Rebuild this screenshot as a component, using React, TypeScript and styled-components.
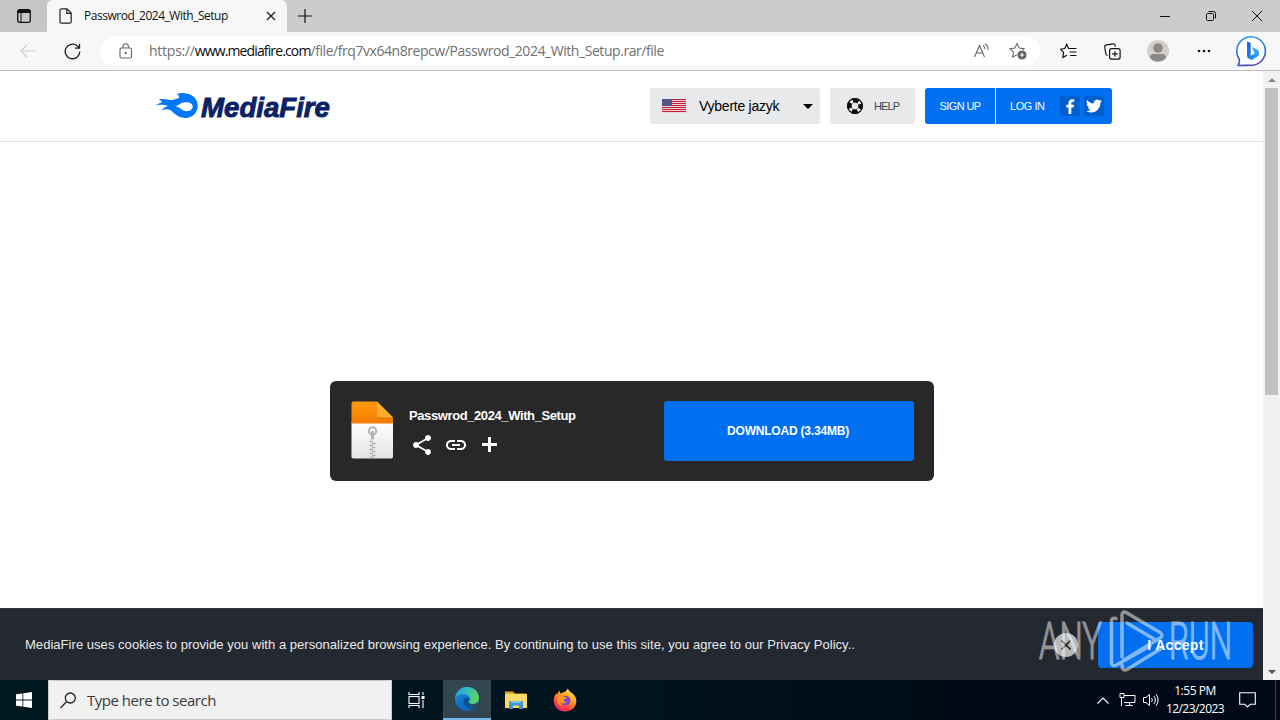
import React from 'react';
import styled, { createGlobalStyle } from 'styled-components';

const ui = `'Open Sans', 'Noto Sans', sans-serif`;
const web = `'Liberation Sans', Arial, sans-serif`;

const colors = {
  blue: '#0070f0',
  blueDark: '#005fce',
  tabStrip: '#cccccc',
  chrome: '#f7f7f7',
  button: '#e7e9ea',
  card: '#282828',
  cookie: '#242830',
};

const GlobalStyle = createGlobalStyle`
  * { box-sizing: border-box; }
  body { margin: 0; overflow: hidden; background: #fff; }
  button { border: 0; padding: 0; margin: 0; background: none; font: inherit; color: inherit; }
  svg { display: block; flex: none; }
`;

const Desktop = styled.div`
  width: 1280px;
  height: 720px;
  display: flex;
  flex-direction: column;
  font-family: ${ui};
  position: relative;
`;

const Text = styled.span<{ $size: number; $spacing?: number; $color?: string; $weight?: number; $web?: boolean }>`
  font-family: ${p => (p.$web ? web : ui)};
  font-size: ${p => p.$size}px;
  font-weight: ${p => p.$weight || 400};
  letter-spacing: ${p => p.$spacing || 0}px;
  color: ${p => p.$color || 'inherit'};
  white-space: pre;
  line-height: 1.3;
`;

const TabStrip = styled.div`
  height: 32px;
  background: ${colors.tabStrip};
  display: flex;
  align-items: stretch;
`;

const TabMenu = styled.div`
  width: 47px;
  display: flex;
  align-items: center;
  justify-content: center;
  border-radius: 0 0 6px 0;
  background: #c6c6c6;
`;

const ActiveTab = styled.div`
  width: 240px;
  background: ${colors.chrome};
  border-radius: 6px 6px 0 0;
  display: flex;
  align-items: center;
  padding: 0 10px 0 12px;
`;

const TabTitle = styled(Text)`
  margin-left: 12px;
  flex: 1;
`;

const NewTab = styled.button`
  width: 36px;
  display: flex;
  align-items: center;
  justify-content: center;
`;

const WindowButtons = styled.div`
  margin-left: auto;
  display: flex;
`;

const WindowButton = styled.button`
  width: 46px;
  display: flex;
  align-items: center;
  justify-content: center;
`;

const Toolbar = styled.div`
  height: 39px;
  background: ${colors.chrome};
  border-bottom: 1px solid #bdbdbd;
  display: flex;
  align-items: center;
  padding-left: 6px;
`;

const ToolSlot = styled.button<{ $width?: number }>`
  width: ${p => p.$width || 44}px;
  height: 38px;
  display: flex;
  align-items: center;
  justify-content: center;
`;

const AddressBar = styled.div`
  width: 940px;
  height: 30px;
  margin: 0 6px;
  border-radius: 15px;
  background: #fff;
  display: flex;
  align-items: center;
  padding: 0 13px 0 19px;
`;

const Url = styled.div`
  flex: 1;
  margin-left: 16px;
  display: flex;
`;

const AddressActions = styled.div`
  display: flex;
  align-items: center;
  gap: 19px;
`;

const Viewport = styled.div`
  height: 609px;
  display: flex;
`;

const Page = styled.div`
  width: 1263px;
  display: flex;
  flex-direction: column;
  background: #fff;
`;

const Scrollbar = styled.div`
  width: 17px;
  background: #f1f1f1;
  display: flex;
  flex-direction: column;
  align-items: center;
`;

const ScrollArrow = styled.div`
  height: 17px;
  display: flex;
  align-items: center;
`;

const ScrollThumb = styled.div`
  width: 13px;
  height: 307px;
  background: #c1c1c1;
  margin-bottom: auto;
`;

const SiteHeader = styled.header`
  height: 71px;
  border-bottom: 1px solid #dfe1e3;
  display: flex;
  align-items: flex-start;
  padding: 17px 151px 0 152px;
`;

const Logo = styled.div`
  margin-right: auto;
  padding-top: 4px;
`;

const HeaderActions = styled.div`
  display: flex;
  gap: 10px;
`;

const HeaderButton = styled.button<{ $width: number }>`
  width: ${p => p.$width}px;
  height: 36px;
  border-radius: 3px;
  background: ${colors.button};
  display: flex;
  align-items: center;
`;

const LanguageButton = styled(HeaderButton)`
  padding: 0 7px 0 12px;
`;

const LanguageName = styled(Text)`
  flex: 1;
  text-align: left;
  margin-left: 13px;
`;

const HelpButton = styled(HeaderButton)`
  padding-left: 17px;
  gap: 11px;
`;

const AccountButtons = styled.div`
  display: flex;
  width: 187px;
  height: 36px;
  border-radius: 3px;
  overflow: hidden;
  background: ${colors.blue};
  color: #fff;
`;

const SignUp = styled.button`
  width: 71px;
  border-right: 1px solid #fff;
  display: flex;
  align-items: center;
  justify-content: center;
`;

const LogIn = styled.div`
  flex: 1;
  display: flex;
  align-items: center;
  justify-content: space-between;
  padding: 0 8px 0 14px;
`;

const SocialGroup = styled.div`
  display: flex;
  gap: 4px;
`;

const Social = styled.span`
  width: 20px;
  height: 20px;
  border-radius: 2px;
  background: ${colors.blueDark};
  display: flex;
  align-items: center;
  justify-content: center;
`;

const Main = styled.main`
  flex: 1;
  padding-top: 239px;
  display: flex;
  justify-content: center;
  align-items: flex-start;
`;

const DownloadCard = styled.section`
  width: 604px;
  height: 100px;
  margin-left: 1px;
  border-radius: 6px;
  background: ${colors.card};
  color: #fff;
  display: flex;
  align-items: flex-start;
  padding: 20px 20px 0 21px;
`;

const FileInfo = styled.div`
  flex: 1;
  margin-left: 16px;
  padding-top: 7px;
  display: flex;
  flex-direction: column;
  gap: 8px;
`;

const FileActions = styled.div`
  display: flex;
  align-items: center;
  gap: 10px;
  padding-left: 1px;
`;

const DownloadButton = styled.button`
  width: 250px;
  height: 60px;
  border-radius: 3px;
  background: ${colors.blue};
  display: flex;
  align-items: center;
  justify-content: center;
  padding: 1px 2px 0 0;
`;

const CookieBar = styled.footer`
  height: 72px;
  background: ${colors.cookie};
  border-top: 1px solid #33373e;
  color: #fff;
  display: flex;
  align-items: center;
  padding: 0 10px 0 25px;
`;

const CookieText = styled(Text)`
  flex: 1;
  padding-top: 1px;
`;

const CloseButton = styled.button`
  width: 24px;
  height: 24px;
  margin-right: 20px;
  border-radius: 50%;
  background: #b6b8ba;
  display: flex;
  align-items: center;
  justify-content: center;
`;

const AcceptButton = styled.button`
  width: 155px;
  height: 46px;
  border-radius: 4px;
  background: ${colors.blue};
  display: flex;
  align-items: center;
  justify-content: center;
  padding-top: 2px;
`;

const Watermark = styled.div`
  position: absolute;
  left: 1030px;
  top: 605px;
  pointer-events: none;
`;

const Taskbar = styled.div`
  height: 40px;
  background: linear-gradient(90deg, #00171f 0%, #00151f 45%, #000a18 75%, #000a18 100%);
  color: #fff;
  display: flex;
  align-items: center;
`;

const TaskButton = styled.button<{ $active?: boolean; $width?: number }>`
  width: ${p => p.$width || 49}px;
  height: 40px;
  display: flex;
  align-items: center;
  justify-content: center;
  background: ${p => (p.$active ? '#334650' : 'transparent')};
  border-bottom: ${p => (p.$active ? '2px solid #76b9ed' : '0')};
`;

const SearchBox = styled.div`
  width: 344px;
  height: 40px;
  border: 1px solid #c8cacb;
  background: #f1f1f1;
  display: flex;
  align-items: center;
  gap: 11px;
  padding: 1px 0 0 11px;
`;

const Tray = styled.div`
  margin-left: auto;
  display: flex;
  align-items: center;
  height: 40px;
  border-right: 1px solid #3b4450;
  margin-right: 4px;
`;

const TrayIcon = styled.div`
  width: 24px;
  display: flex;
  justify-content: center;
`;

const Clock = styled.div`
  width: 64px;
  display: flex;
  flex-direction: column;
  align-items: center;
  gap: 2px;
`;

const Notifications = styled.div`
  width: 48px;
  display: flex;
  justify-content: center;
  padding-right: 8px;
`;

function MediaFireLogo() {
  return (
    <svg width="182" height="30" viewBox="0 0 182 30">
      <path
        fill="#0077ff"
        d="M1 13.800C4.500 13.500 6.500 11.500 9.700 10.300 9.500 8.900 8.300 8 6.800 7.500 10.500 6.500 14 7.600 17.500 7.900 21 8.200 24 7.200 27.200 5.800 27.300 3.800 26 2.600 24.500 2 27.500.9 30.300.9 33 1.200 40.500 2 45.700 7 45.700 13.500 45.700 20.800 40.300 25.900 33.500 25.900 27.500 25.900 23.800 22.700 20.300 19.700 17.300 17.300 14.500 16.500 9.500 18.500 11.200 16 13.500 14.800 16 14 11.500 12.300 6 12.600 1 13.800z"
      />
      <path fill="#fff" d="M23 14.200c3.400-.2 4.800-3.800 10.500-4 4.400-.2 7.200 1.500 7.200 4.300 0 2.900-2.900 4.700-6.200 4.700-4.700 0-6.500-4.700-11.500-5z" />
      <text
        x="49"
        y="24.500"
        textLength="129"
        lengthAdjust="spacingAndGlyphs"
        fontFamily="Liberation Sans, Arial, sans-serif"
        fontSize="27"
        fontWeight="700"
        fontStyle="italic"
        fill="#0b2265"
        stroke="#0b2265"
        strokeWidth="0.900"
      >
        MediaFire
      </text>
    </svg>
  );
}

function Flag() {
  return (
    <svg width="24" height="14" viewBox="0 0 24 14">
      <rect width="24" height="14" fill="#fff" />
      {[0, 2, 4, 6, 8, 10, 12].map(y => (
        <rect key={y} y={y} width="24" height="1.200" fill="#c01f3a" />
      ))}
      <rect width="10" height="7" fill="#54538a" />
    </svg>
  );
}

function Lifebuoy() {
  return (
    <svg width="16" height="16" viewBox="0 0 16 16">
      <circle cx="8" cy="8" r="5.500" fill="none" stroke="#fff" strokeWidth="4" />
      <circle cx="8" cy="8" r="5.700" fill="none" stroke="#0a0a0a" strokeWidth="4.300" strokeDasharray="5.950 3" strokeDashoffset="2.980" />
      <circle cx="8" cy="8" r="7.400" fill="none" stroke="#0a0a0a" strokeWidth="1.200" />
      <circle cx="8" cy="8" r="3.600" fill="none" stroke="#0a0a0a" strokeWidth="0.700" />
      <circle cx="8" cy="8" r="3.200" fill="#e7e9ea" />
    </svg>
  );
}

function ZipFile() {
  return (
    <svg width="42" height="58" viewBox="0 0 42 58">
      <defs>
        <linearGradient id="zipTop" x1="0" y1="0" x2="0" y2="1">
          <stop offset="0" stopColor="#ff9a0b" />
          <stop offset="1" stopColor="#f57c00" />
        </linearGradient>
        <linearGradient id="zipBody" x1="0" y1="0" x2="0" y2="1">
          <stop offset="0" stopColor="#fff" />
          <stop offset="1" stopColor="#e3e3e3" />
        </linearGradient>
      </defs>
      <path fill="url(#zipBody)" d="M.5 21H42V55.500a2 2 0 0 1-2 2H2.500a2 2 0 0 1-2-2z" />
      <path fill="url(#zipTop)" d="M.5 22.500V2.500a2 2 0 0 1 2-2H26L42 16.500V22.500z" />
      <path fill="#e06f00" d="M26 15l2 2.800H42V16.500z" />
      <path fill="#ffab2e" d="M26 .5L42 16.500H28a2 2 0 0 1-2-2z" />
      <circle cx="21.500" cy="30" r="3.700" fill="none" stroke="#b3b3b3" strokeWidth="2" />
      <rect x="20" y="30" width="3" height="8.500" rx="1" fill="#b3b3b3" />
      <path
        d="M18.500 40.500h3.500M21 42.500h3.500M18.500 44.500h3.500M21 46.500h3.500M18.500 48.500h3.500M21 50.500h3.500M18.500 52.500h3.500M21 54.500h3.500M18.500 56.500h3.500"
        fill="none"
        stroke="#ababab"
        strokeWidth="1.600"
      />
    </svg>
  );
}

function BingIcon() {
  return (
    <svg width="32" height="32" viewBox="0 0 32 32">
      <defs>
        <linearGradient id="bingRing" x1="0" y1="0" x2="0.300" y2="1">
          <stop offset="0" stopColor="#2f9be8" />
          <stop offset="0.600" stopColor="#2674d8" />
          <stop offset="1" stopColor="#4a4fb0" />
        </linearGradient>
        <linearGradient id="bingB" x1="0" y1="0" x2="1" y2="1">
          <stop offset="0" stopColor="#1b62de" />
          <stop offset="0.500" stopColor="#1b7be8" />
          <stop offset="1" stopColor="#38bdf3" />
        </linearGradient>
      </defs>
      <path
        d="M2 30.500c1.300-2 1.700-4 1.200-6.500A14.300 14.300 0 1 1 16.600 30.300c-5 0-9.500.2-14.600.2z"
        fill="#fff"
        stroke="url(#bingRing)"
        strokeWidth="1.600"
        strokeLinejoin="round"
      />
      <path d="M11 6.500l3.700 1.300v12.900l4-2.300 4.300-1.900v3.500c0 .6-.4 1-1 1.300l-5.300 3.200c-.9.500-1.500.4-2.300 0l-2.400-1.500c-.7-.5-1-1-1-1.800z" fill="url(#bingB)" />
      <path d="M16 12l4.700 2.200c2.200 1 3 3.300 1.900 5.800l-4.300-2.200z" fill="#3aa5f2" />
    </svg>
  );
}

function EdgeIcon() {
  return (
    <svg width="26" height="26" viewBox="0 0 26 26">
      <defs>
        <linearGradient id="edgeTop" x1="0" y1="0.300" x2="1" y2="0.600">
          <stop offset="0" stopColor="#239fdc" />
          <stop offset="0.500" stopColor="#36c0b4" />
          <stop offset="1" stopColor="#62d957" />
        </linearGradient>
        <linearGradient id="edgeBase" x1="0" y1="0" x2="0.500" y2="1">
          <stop offset="0" stopColor="#1c8fda" />
          <stop offset="1" stopColor="#0b63b8" />
        </linearGradient>
      </defs>
      <circle cx="13" cy="13" r="12" fill="url(#edgeBase)" />
      <path fill="url(#edgeTop)" d="M1 12.500C1.800 5.700 6.800 1 13 1c7 0 12 5 12 10.800 0 4-3 6.200-6.300 6.200-2.300 0-4-.8-4-1.700 0-.7 1.300-1.200 1.300-3.200 0-2.700-2.800-5.100-6.700-5.100C5.500 8 2.500 9.700 1 12.500z" />
      <path fill="#0c4f97" d="M9.500 14.500c0 5 4 8.700 8.700 8.700 2 0 3.800-.9 5.200-2.200-2.200 1-4.800.9-6.800-.3-2-1.200-3.200-3.100-2.700-5.200.4-1.300 1.500-1.700 1.500-3.200-3-1.800-5.900-.8-5.900 2.200z" />
      <path fill="#334650" d="M14.400 15.500c0 1.700 2 2.900 4.800 2.900 1.900 0 3.500-.6 4.800-1.600.5 1.500.2 2.700-.6 3.700-2.300.9-4.800.8-6.700-.4-1.900-1.100-2.800-2.900-2.300-4.600z" />
    </svg>
  );
}

function FolderIcon() {
  return (
    <svg width="22" height="20" viewBox="0 0 22 20">
      <path fill="#e9a81c" d="M0 1.500h8l2 2h11v5H0z" />
      <path fill="#ffd968" d="M0 4h22v14H0z" />
      <path fill="#3b93d4" d="M4 12a1 1 0 0 1 1-1h12a1 1 0 0 1 1 1v7h-4v-3.500H8V19H4z" />
      <path fill="#7cc3ef" d="M6 11h10v2H6z" />
    </svg>
  );
}

function FirefoxIcon() {
  return (
    <svg width="24" height="24" viewBox="0 0 24 24">
      <defs>
        <linearGradient id="foxBody" x1="0.800" y1="0" x2="0.200" y2="1">
          <stop offset="0" stopColor="#fff14a" />
          <stop offset="0.400" stopColor="#ff9a1f" />
          <stop offset="0.750" stopColor="#ff3a4b" />
          <stop offset="1" stopColor="#e31587" />
        </linearGradient>
      </defs>
      <path fill="url(#foxBody)" d="M12.500 3.500L15 .5c.4 2 1.700 2.700 3.200 4.100C21 6.600 23.300 9 23.300 13c0 6-5 10.500-11.200 10.500C5.500 23.500.7 18.600.7 12.500c0-3 1-5.400 2.700-7.300l.6 1.500L6 2.500l1.500 3z" />
      <circle cx="12.500" cy="12.500" r="4.800" fill="#7a47d0" />
      <path fill="#ff9822" d="M4.500 7c2.500-.5 5 .5 6.500 2h3c-.5 1.600-2.600 1.900-3.300 3-.5 1 .8 2.200 2.800 1.700-1 2.200-4.400 2.300-6 .2-.5 2.500 1.800 4.600 4.500 4.600-4.500 1-8-1.700-8.200-6z" />
    </svg>
  );
}

function AnyRunMark() {
  return (
    <svg width="220" height="70" viewBox="0 0 220 70" opacity="0.500">
      <g fill="#fff" stroke="#fff" strokeWidth="1.200" fontFamily="Roboto, sans-serif" fontWeight="300" fontSize="52">
        <text x="9" y="54" textLength="63" lengthAdjust="spacingAndGlyphs">ANY</text>
        <text x="139" y="54" textLength="63" lengthAdjust="spacingAndGlyphs">RUN</text>
      </g>
      <g fill="none" stroke="#fff" strokeWidth="3.500" strokeLinejoin="round" strokeLinecap="round">
        <path d="M86 13.500c-3-1-4.500 0-4.500 3v41c0 3 2 4 5 2.500L120 41" />
        <path d="M92 52V10c0-3 2-4 5-2l33 19.500c2.500 1.500 2.500 4 0 5.500L94 55" />
        <path d="M97 18l27 16" />
        <path d="M92 60c0 4.500 2 6 5 4.500L132 43" />
      </g>
    </svg>
  );
}

function App() {
  return (
    <Desktop>
      <GlobalStyle />

      <TabStrip>
        <TabMenu>
          <svg width="14" height="14" viewBox="0 0 14 14">
            <rect x=".7" y=".7" width="12.600" height="12.600" rx="2" fill="none" stroke="#111" strokeWidth="1.300" />
            <path d="M.7 2.500a2 2 0 0 1 2-2h8.600a2 2 0 0 1 2 2V4H.7z" fill="#111" />
            <path d="M4 4v9.300" stroke="#111" strokeWidth="1" />
          </svg>
        </TabMenu>
        <ActiveTab>
          <svg width="13" height="16" viewBox="0 0 13 16" fill="none" stroke="#222" strokeWidth="1.200">
            <path d="M2.500.8H8L12.200 5v8.700a1.500 1.500 0 0 1-1.500 1.500H2.500A1.500 1.500 0 0 1 1 13.700V2.300A1.500 1.500 0 0 1 2.500.8zM7.800 1v4.300H12" />
          </svg>
          <TabTitle $size={12} $spacing={-0.48} $color="#111">Passwrod_2024_With_Setup</TabTitle>
          <svg width="12" height="12" viewBox="0 0 12 12" stroke="#222" strokeWidth="1.400">
            <path d="M2 2l8 8M10 2l-8 8" />
          </svg>
        </ActiveTab>
        <NewTab>
          <svg width="14" height="14" viewBox="0 0 14 14" stroke="#111" strokeWidth="1.200">
            <path d="M7 0v14M0 7h14" />
          </svg>
        </NewTab>
        <WindowButtons>
          <WindowButton>
            <svg width="10" height="10" viewBox="0 0 10 10"><path d="M0 5.500h10" stroke="#111" /></svg>
          </WindowButton>
          <WindowButton>
            <svg width="10" height="10" viewBox="0 0 10 10" fill="none" stroke="#111">
              <rect x=".5" y="2.500" width="7" height="7" rx="1" />
              <path d="M2.500.5H7.500a2 2 0 0 1 2 2V7.500" />
            </svg>
          </WindowButton>
          <WindowButton>
            <svg width="10" height="10" viewBox="0 0 10 10" stroke="#111"><path d="M0 0l10 10M10 0L0 10" /></svg>
          </WindowButton>
        </WindowButtons>
      </TabStrip>

      <Toolbar>
        <ToolSlot>
          <svg width="16" height="14" viewBox="0 0 16 14" fill="none" stroke="#cfcfcf" strokeWidth="1.200">
            <path d="M16 7H1M7 1L1 7l6 6" />
          </svg>
        </ToolSlot>
        <ToolSlot>
          <svg width="17" height="17" viewBox="0 0 17 17" fill="none" stroke="#222" strokeWidth="1.300">
            <path d="M15.800 8.500A7.300 7.300 0 1 1 13 2.700L15.300 5M15.500.8V5.200H11" />
          </svg>
        </ToolSlot>
        <AddressBar>
          <svg width="14" height="16" viewBox="0 0 14 16" fill="none" stroke="#666" strokeWidth="1.100">
            <rect x="1" y="5" width="11.500" height="10" rx="1.500" />
            <path d="M4 5V3.500a2.700 2.700 0 0 1 5.400 0V5" />
            <circle cx="6.700" cy="10" r=".6" fill="#666" />
          </svg>
          <Url>
            <Text $size={14} $spacing={-0.25} $color="#707070">https://</Text>
            <Text $size={14} $spacing={-0.87} $color="#0a0a0a">www.mediafire.com</Text>
            <Text $size={14} $spacing={-0.44} $color="#707070">/file/frq7vx64n8repcw/Passwrod_2024_With_Setup.rar/file</Text>
          </Url>
          <AddressActions>
            <svg width="17" height="16" viewBox="0 0 17 16" fill="none" stroke="#666" strokeWidth="1.100">
              <path d="M1.500 14L6.500 2.500 11.500 14M3.300 10H9.700M10 2.500a4 4 0 0 1 1.800 3.500M12 .8a7 7 0 0 1 3 6" />
            </svg>
            <svg width="18" height="18" viewBox="0 0 18 18" fill="none" stroke="#666" strokeWidth="1.100">
              <path d="M8 1.500l2.100 4.500 4.900.7-3.500 3.500.8 4.900L8 12.800l-4.300 2.300.8-4.900L1 6.700 5.900 6z" />
              <circle cx="13" cy="13" r="4.800" fill="#606060" stroke="#fff" strokeWidth=".6" />
              <path d="M13 10.800v4.400M10.800 13h4.400" stroke="#fff" />
            </svg>
          </AddressActions>
        </AddressBar>
        <ToolSlot>
          <svg width="17" height="16" viewBox="0 0 17 16" fill="none" stroke="#111" strokeWidth="1.200">
            <path d="M10.500 5.500H8.600L6.700 1.300 4.800 5.500l-4.300.7 3.100 3.200-.7 4.900 4-2.100M10 5.500h6.500M9.500 9h7M10 12.500h6.500" />
          </svg>
        </ToolSlot>
        <ToolSlot>
          <svg width="17" height="17" viewBox="0 0 17 17" fill="none" stroke="#111" strokeWidth="1.200">
            <rect x="5.600" y="5.600" width="10.500" height="10.500" rx="2" />
            <path d="M10.900 8.200v5.400M8.200 10.900h5.400M3.700 12.500A2.300 2.300 0 0 1 1.700 10.500L.8 4A2 2 0 0 1 2.500 1.800l6.200-1A2.200 2.200 0 0 1 11.200 2.700l.2 1" />
          </svg>
        </ToolSlot>
        <ToolSlot $width={48}>
          <svg width="22" height="22" viewBox="0 0 22 22">
            <circle cx="11" cy="11" r="11" fill="#d2cfcc" />
            <circle cx="11" cy="8" r="4.800" fill="#8b8886" />
            <path d="M3 17.500c0-2.500 2-3.500 3.500-3.500h9c1.500 0 3.500 1 3.500 3.500-2 3-5 4-8 4s-6-1-8-4z" fill="#8b8886" />
          </svg>
        </ToolSlot>
        <ToolSlot>
          <svg width="14" height="4" viewBox="0 0 14 4" fill="#111">
            <circle cx="2" cy="2" r="1.300" /><circle cx="7" cy="2" r="1.300" /><circle cx="12" cy="2" r="1.300" />
          </svg>
        </ToolSlot>
        <ToolSlot $width={52}><BingIcon /></ToolSlot>
      </Toolbar>

      <Viewport>
        <Page>
          <SiteHeader>
            <Logo><MediaFireLogo /></Logo>
            <HeaderActions>
              <LanguageButton $width={170}>
                <Flag />
                <LanguageName $web $size={14} $spacing={-0.25} $color="#000">Vyberte jazyk</LanguageName>
                <svg width="10" height="5" viewBox="0 0 10 5"><path d="M0 0h10L5 5z" fill="#000" /></svg>
              </LanguageButton>
              <HelpButton $width={85}>
                <Lifebuoy />
                <Text $web $size={11} $spacing={-0.9} $color="#41464d">HELP</Text>
              </HelpButton>
              <AccountButtons>
                <SignUp><Text $web $size={11} $spacing={-0.6}>SIGN UP</Text></SignUp>
                <LogIn>
                  <Text $web $size={11} $spacing={-0.45}>LOG IN</Text>
                  <SocialGroup>
                    <Social>
                      <svg width="9" height="15" viewBox="0 0 9 15"><path fill="#fff" d="M2.500 15V8.500H.3V5.700h2.200V4C2.500 1.500 4 .3 6 .3c1 0 1.900.1 2.200.1v2.500H6.700c-1.200 0-1.400.6-1.400 1.400v1.400H8L7.600 8.500H5.300V15z" /></svg>
                    </Social>
                    <Social>
                      <svg width="16" height="14" viewBox="0 2 24 20"><path fill="#fff" d="M23.950 4.570a10 10 0 0 1-2.820.77 4.960 4.960 0 0 0 2.160-2.720c-.95.550-2 .95-3.130 1.180a4.920 4.920 0 0 0-8.380 4.480A13.930 13.930 0 0 1 1.640 3.160a4.920 4.920 0 0 0 1.520 6.570 4.900 4.900 0 0 1-2.230-.62v.06a4.920 4.920 0 0 0 3.950 4.830 5 5 0 0 1-2.210.08 4.930 4.930 0 0 0 4.600 3.420A9.870 9.870 0 0 1 0 19.540a13.940 13.940 0 0 0 7.550 2.210c9.050 0 14-7.500 14-13.980 0-.21 0-.42-.02-.63a9.940 9.940 0 0 0 2.460-2.550z" /></svg>
                    </Social>
                  </SocialGroup>
                </LogIn>
              </AccountButtons>
            </HeaderActions>
          </SiteHeader>

          <Main>
            <DownloadCard>
              <ZipFile />
              <FileInfo>
                <Text $web $size={13} $weight={700} $spacing={-0.4}>Passwrod_2024_With_Setup</Text>
                <FileActions>
                  <svg width="24" height="24" viewBox="0 0 24 24" fill="#fff">
                    <path d="M18 16.080c-.76 0-1.440.3-1.960.77L8.910 12.700c.05-.23.09-.46.09-.7s-.04-.47-.09-.7l7.050-4.110c.54.5 1.250.81 2.040.81 1.660 0 3-1.340 3-3s-1.340-3-3-3-3 1.340-3 3c0 .24.04.47.09.7L8.040 9.810C7.500 9.310 6.790 9 6 9c-1.660 0-3 1.340-3 3s1.340 3 3 3c.79 0 1.500-.31 2.040-.81l7.120 4.160c-.05.21-.08.43-.08.650 0 1.610 1.310 2.920 2.920 2.920s2.920-1.310 2.920-2.920-1.310-2.920-2.920-2.920z" />
                  </svg>
                  <svg width="24" height="24" viewBox="0 0 24 24" fill="#fff">
                    <path d="M3.900 12c0-1.710 1.390-3.100 3.100-3.100h4V7H7c-2.760 0-5 2.240-5 5s2.240 5 5 5h4v-1.900H7c-1.710 0-3.100-1.390-3.100-3.100zM8 13h8v-2H8v2zm9-6h-4v1.900h4c1.710 0 3.100 1.390 3.100 3.100s-1.390 3.100-3.100 3.100h-4V17h4c2.760 0 5-2.240 5-5s-2.240-5-5-5z" />
                  </svg>
                  <svg width="24" height="24" viewBox="0 0 24 24" stroke="#fff" strokeWidth="3">
                    <path d="M11.500 4v15M4 11.500h15" />
                  </svg>
                </FileActions>
              </FileInfo>
              <DownloadButton>
                <Text $web $size={12} $weight={700} $spacing={-0.2}>DOWNLOAD (3.34MB)</Text>
              </DownloadButton>
            </DownloadCard>
          </Main>

          <CookieBar>
            <CookieText $web $size={13} $spacing={0.04} $color="#e9eaeb">
              MediaFire uses cookies to provide you with a personalized browsing experience. By continuing to use this site, you agree to our Privacy Policy..
            </CookieText>
            <CloseButton>
              <svg width="10" height="10" viewBox="0 0 10 10" stroke="#24272c" strokeWidth="1.700"><path d="M.5.5l9 9M9.500.5l-9 9" /></svg>
            </CloseButton>
            <AcceptButton>
              <Text $web $size={14} $weight={700} $spacing={0.3}>I Accept</Text>
            </AcceptButton>
          </CookieBar>
        </Page>
        <Scrollbar>
          <ScrollArrow><svg width="8" height="4" viewBox="0 0 8 4"><path d="M0 4L4 0l4 4z" fill="#8a8a8a" /></svg></ScrollArrow>
          <ScrollThumb />
          <ScrollArrow><svg width="8" height="4" viewBox="0 0 8 4"><path d="M0 0h8L4 4z" fill="#505050" /></svg></ScrollArrow>
        </Scrollbar>
      </Viewport>

      <Taskbar>
        <TaskButton $width={48}>
          <svg width="16" height="16" viewBox="0 0 16 16" fill="#fff">
            <path d="M0 2.300L6.500 1.400V7.600H0zM7.300 1.300L16 0v7.600H7.300zM0 8.400h6.500v6.200L0 13.700zM7.300 8.400H16V16l-8.700-1.300z" />
          </svg>
        </TaskButton>
        <SearchBox>
          <svg width="16" height="17" viewBox="0 0 16 17" fill="none" stroke="#222" strokeWidth="1.300">
            <circle cx="10.300" cy="6" r="5" />
            <path d="M6.500 9.800L.5 16" />
          </svg>
          <Text $size={15} $spacing={-0.48} $color="#3a3a3a">Type here to search</Text>
        </SearchBox>
        <TaskButton $width={51}>
          <svg width="20" height="16" viewBox="0 0 20 16" fill="none" stroke="#fff" strokeWidth="1.100">
            <path d="M1 0v2.500h10V0M1 16v-2.500h10V16M15 0v3M15 8v8" />
            <rect x="1" y="4.500" width="10" height="7" />
            <rect x="13.500" y="4" width="3" height="3" fill="#fff" stroke="none" />
          </svg>
        </TaskButton>
        <TaskButton $active $width={48}><EdgeIcon /></TaskButton>
        <TaskButton><FolderIcon /></TaskButton>
        <TaskButton><FirefoxIcon /></TaskButton>
        <Tray>
          <TrayIcon>
            <svg width="12" height="7" viewBox="0 0 12 7" fill="none" stroke="#fff" strokeWidth="1.200"><path d="M.5 6.500L6 1l5.500 5.500" /></svg>
          </TrayIcon>
          <TrayIcon>
            <svg width="17" height="14" viewBox="0 0 17 14" fill="none" stroke="#fff">
              <path d="M5 2.500h11v7H5M10.500 9.500v3M6.500 12.500h7M2.500 5v8M1 .5h4v4H1z" />
            </svg>
          </TrayIcon>
          <TrayIcon>
            <svg width="17" height="14" viewBox="0 0 17 14" fill="none" stroke="#fff">
              <path d="M.5 4.500h2.500L6.500 1.500v11L3 9.500H.5zM8.500 5a3 3 0 0 1 0 4M10.800 3a6 6 0 0 1 0 8M13 1.200a9 9 0 0 1 0 11.600" />
            </svg>
          </TrayIcon>
          <Clock>
            <Text $size={12} $spacing={-0.45}>1:55 PM</Text>
            <Text $size={12} $spacing={-0.55}>12/23/2023</Text>
          </Clock>
          <Notifications>
            <svg width="17" height="16" viewBox="0 0 17 16" fill="none" stroke="#fff" strokeWidth="1.100">
              <path d="M.7.7h15.600v11.500h-5L8.500 15l-2.800-2.800h-5z" />
            </svg>
          </Notifications>
        </Tray>
      </Taskbar>

      <Watermark><AnyRunMark /></Watermark>
    </Desktop>
  );
}

export default App;
